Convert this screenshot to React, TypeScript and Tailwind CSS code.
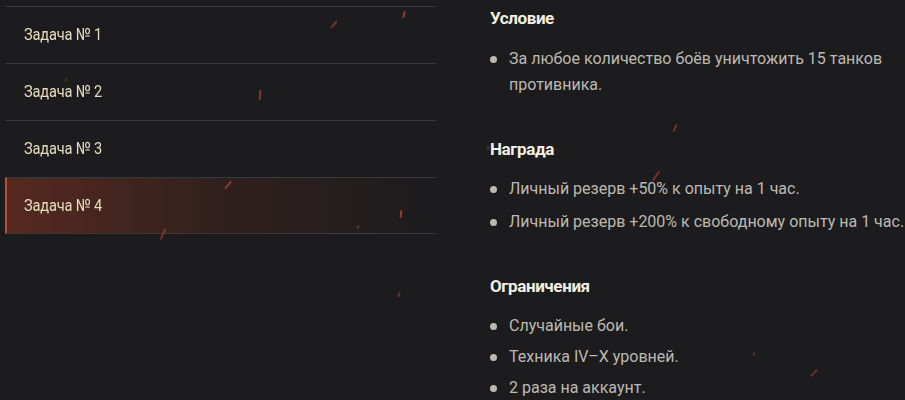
import React from "react";

const tasks = ["Задача № 1", "Задача № 2", "Задача № 3", "Задача № 4"];

const sparks: { x: number; y: number; len: number; rot: number; o: number }[] = [
  { x: 403, y: 11, len: 7, rot: 15, o: 0.8 },
  { x: 333, y: 20, len: 9, rot: 40, o: 0.6 },
  { x: 65, y: 78, len: 4, rot: 10, o: 0.4 },
  { x: 259, y: 90, len: 10, rot: 5, o: 0.7 },
  { x: 227, y: 180, len: 10, rot: 40, o: 0.7 },
  { x: 400, y: 210, len: 8, rot: 5, o: 0.8 },
  { x: 357, y: 225, len: 4, rot: 40, o: 0.5 },
  { x: 162, y: 228, len: 12, rot: 25, o: 0.6 },
  { x: 398, y: 292, len: 5, rot: 10, o: 0.5 },
  { x: 674, y: 124, len: 8, rot: 25, o: 0.6 },
  { x: 655, y: 170, len: 12, rot: 35, o: 0.6 },
  { x: 487, y: 146, len: 4, rot: 30, o: 0.4 },
  { x: 753, y: 352, len: 4, rot: 20, o: 0.4 },
  { x: 813, y: 368, len: 10, rot: 45, o: 0.5 },
];

function Bullet({ children }: { children: React.ReactNode }) {
  return (
    <li className="flex items-start">
      <span className="mt-[10px] mr-[12px] h-[7px] w-[7px] shrink-0 rounded-full bg-[#bdb9b1]" />
      <span>{children}</span>
    </li>
  );
}

export default function App() {
  return (
    <div
      className="relative h-[400px] w-[905px] overflow-hidden bg-[#1c1c1e]"
      style={{ fontFamily: "Roboto, 'Noto Sans', sans-serif" }}
    >
      <div className="flex">
        <div className="ml-[5px] w-[431px] pt-[6px]">
          {tasks.map((t, i) => {
            const active = i === 3;
            return (
              <div
                key={t}
                className={
                  "flex h-[57px] items-center border-t border-[#39383b] " +
                  (i === 3 ? "border-b " : "") +
                  (active
                    ? "border-l-2 border-l-[#b9502f] bg-gradient-to-r from-[#56291f] via-[#30201d] to-[#1c1c1e] pl-[17px]"
                    : "pl-[19px]")
                }
              >
                <span className="inline-block origin-left scale-x-[0.86] text-[17px] tracking-[-0.2px] text-[#e6ddbe]">
                  {t}
                </span>
              </div>
            );
          })}
        </div>
        <div className="ml-[54px] flex-1 pt-[7px]">
          <h3 className="text-[17px] font-bold leading-[22px] tracking-[-0.4px] text-[#f3efe4]">Условие</h3>
          <ul className="mt-[17px] text-[16px] leading-[26px] text-[#bdb9b1]">
            <Bullet>
              За любое количество боёв уничтожить 15 танков
              <br />
              противника.
            </Bullet>
          </ul>
          <h3 className="mt-[40px] text-[17px] font-bold leading-[22px] tracking-[-0.4px] text-[#f3efe4]">Награда</h3>
          <ul className="mt-[16px] space-y-[7px] text-[16px] leading-[26px] text-[#bdb9b1]">
            <Bullet>Личный резерв +50% к опыту на 1 час.</Bullet>
            <Bullet>Личный резерв +200% к свободному опыту на 1 час.</Bullet>
          </ul>
          <h3 className="mt-[40px] text-[17px] font-bold leading-[22px] tracking-[-0.4px] text-[#f3efe4]">Ограничения</h3>
          <ul className="mt-[16px] space-y-[5px] text-[16px] leading-[26px] text-[#bdb9b1]">
            <Bullet>Случайные бои.</Bullet>
            <Bullet>Техника IV–X уровней.</Bullet>
            <Bullet>2 раза на аккаунт.</Bullet>
          </ul>
        </div>
      </div>
      {sparks.map((s, i) => (
        <span
          key={i}
          className="absolute w-[2px] rounded-full bg-[#b8432a] blur-[0.5px]"
          style={{
            left: s.x,
            top: s.y,
            height: s.len,
            opacity: s.o,
            transform: `rotate(${s.rot}deg)`,
          }}
        />
      ))}
    </div>
  );
}
